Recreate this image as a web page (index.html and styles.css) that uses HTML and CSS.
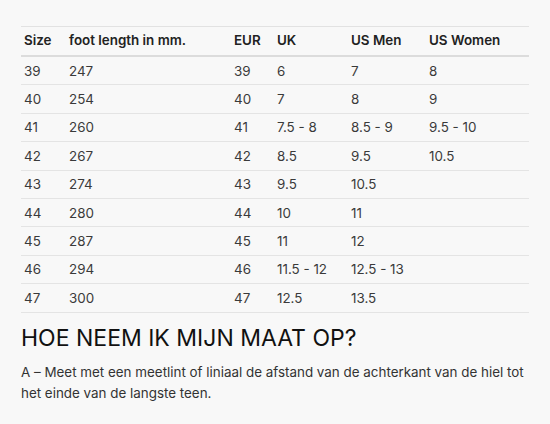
FILE: index.html
```html
<!DOCTYPE html>
<html lang="nl">
<head>
<meta charset="utf-8">
<link rel="stylesheet" href="styles.css">
</head>
<body>
<main class="page">
  <table class="sizes">
    <colgroup>
      <col class="c-size"><col class="c-foot"><col class="c-eur"><col class="c-uk"><col class="c-men"><col class="c-women">
    </colgroup>
    <thead>
      <tr><th>Size</th><th>foot length in mm.</th><th>EUR</th><th>UK</th><th>US Men</th><th>US Women</th></tr>
    </thead>
    <tbody>
      <tr><td>39</td><td>247</td><td>39</td><td>6</td><td>7</td><td>8</td></tr>
      <tr><td>40</td><td>254</td><td>40</td><td>7</td><td>8</td><td>9</td></tr>
      <tr><td>41</td><td>260</td><td>41</td><td>7.5 - 8</td><td>8.5 - 9</td><td>9.5 - 10</td></tr>
      <tr><td>42</td><td>267</td><td>42</td><td>8.5</td><td>9.5</td><td>10.5</td></tr>
      <tr><td>43</td><td>274</td><td>43</td><td>9.5</td><td>10.5</td><td></td></tr>
      <tr><td>44</td><td>280</td><td>44</td><td>10</td><td>11</td><td></td></tr>
      <tr><td>45</td><td>287</td><td>45</td><td>11</td><td>12</td><td></td></tr>
      <tr><td>46</td><td>294</td><td>46</td><td>11.5 - 12</td><td>12.5 - 13</td><td></td></tr>
      <tr><td>47</td><td>300</td><td>47</td><td>12.5</td><td>13.5</td><td></td></tr>
    </tbody>
  </table>
  <h2 class="title">HOE NEEM IK MIJN MAAT OP?</h2>
  <p class="text">A – Meet met een meetlint of liniaal de afstand van de achterkant van de hiel tot het einde van de langste teen.</p>
</main>
</body>
</html>
```
FILE: styles.css
```css
html, body {
  margin: 0;
  padding: 0;
  background: #f8f8f8;
}
body {
  font-family: Inter, "Noto Sans", sans-serif;
  color: #333;
}
.page {
  padding: 26px 21px 0 21px;
}
.sizes {
  width: 508px;
  border-collapse: collapse;
  table-layout: fixed;
  font-size: 13.4px;
  border-top: 1px solid #e2e2e2;
}
.c-size { width: 45px; }
.c-foot { width: 165px; }
.c-eur { width: 43px; }
.c-uk { width: 74px; }
.c-men { width: 78px; }
.c-women { width: 103px; }
.sizes th,
.sizes td {
  text-align: left;
  padding: 0 3px;
  line-height: 16px;
  white-space: nowrap;
}
.sizes th {
  height: 26px;
  padding-bottom: 2px;
  font-weight: 600;
  color: #222;
  border-bottom: 2px solid #dcdcdc;
}
.sizes td {
  height: 27.4px;
  color: #3a3a3a;
  border-bottom: 1px solid #e4e4e4;
}
.title {
  margin: 10px 0 0 0;
  font-size: 23px;
  font-weight: 400;
  color: #111;
  line-height: 30px;
}
.text {
  margin: 9px 0 0 0;
  font-size: 13.4px;
  line-height: 21px;
  color: #333;
  width: 508px;
}
```
